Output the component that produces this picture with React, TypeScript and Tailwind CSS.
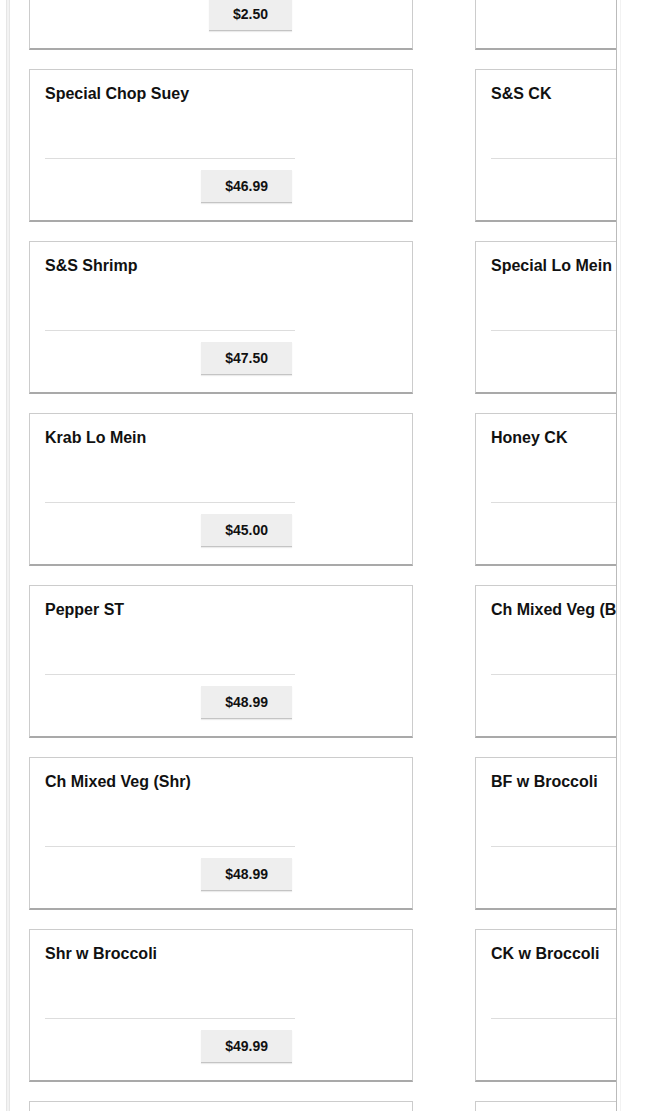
import React from "react";

type Item = { name: string; price: string };

const left: Item[] = [
  { name: "", price: "$2.50" },
  { name: "Special Chop Suey", price: "$46.99" },
  { name: "S&S Shrimp", price: "$47.50" },
  { name: "Krab Lo Mein", price: "$45.00" },
  { name: "Pepper ST", price: "$48.99" },
  { name: "Ch Mixed Veg (Shr)", price: "$48.99" },
  { name: "Shr w Broccoli", price: "$49.99" },
  { name: "", price: "" },
];

const right: Item[] = [
  { name: "", price: "" },
  { name: "S&S CK", price: "" },
  { name: "Special Lo Mein", price: "" },
  { name: "Honey CK", price: "" },
  { name: "Ch Mixed Veg (BF)", price: "" },
  { name: "BF w Broccoli", price: "" },
  { name: "CK w Broccoli", price: "" },
  { name: "", price: "" },
];

function Card({ item }: { item: Item }) {
  return (
    <div className="w-[384px] h-[153px] bg-white border border-[#cccccc] border-b-2 border-b-[#a9a9a9] pl-[15px] pt-[15px]">
      <div className="h-[73px] text-[16px] leading-[18px] font-bold text-[#111] whitespace-nowrap">
        {item.name}
      </div>
      <div className="w-[250px] h-px bg-[#dddddd]" />
      <div className="w-[250px] flex justify-end pr-[3px] mt-[11px]">
        {item.price ? (
          <div className="h-[33px] px-[24px] bg-[#eeeeee] border-b border-[#c4c4c4] shadow-[0_1px_1px_rgba(0,0,0,0.08)] flex items-center text-[14px] font-bold text-[#111]">
            {item.price}
          </div>
        ) : null}
      </div>
    </div>
  );
}

export default function App() {
  const rows = left.map((l, i) => [l, right[i]] as const);
  return (
    <div
      className="flex h-[1111px] w-[650px] overflow-hidden bg-white"
      style={{ fontFamily: '"Liberation Sans", Arial, sans-serif' }}
    >
      <div className="w-[6px] shrink-0" />
      <div className="w-[4px] shrink-0 bg-[#f3f3f3] border-x border-[#e6e6e6]" />
      <div className="w-[607px] shrink-0 overflow-hidden border-r border-[#bbbbbb]">
        <div className="-mt-[103px] pl-[19px] flex flex-col gap-[19px]">
          {rows.map(([l, r], i) => (
            <div key={i} className="flex gap-[62px]">
              <div className="shrink-0">
                <Card item={l} />
              </div>
              <div className="shrink-0">
                <Card item={r} />
              </div>
            </div>
          ))}
        </div>
      </div>
      <div className="w-[3px] shrink-0" />
      <div className="w-px shrink-0 bg-[#f2f2f2]" />
    </div>
  );
}
